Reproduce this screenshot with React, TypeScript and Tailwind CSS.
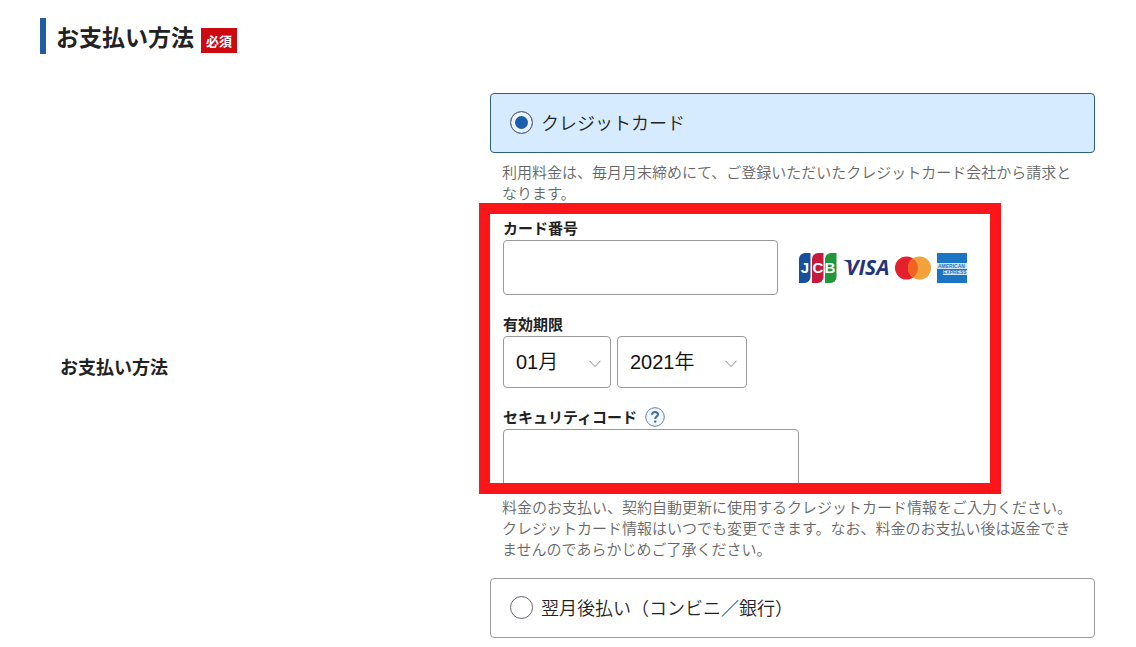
import { useState } from "react";
import type { ReactNode } from "react";
import { clsx } from "clsx";

type PaymentMethod = "card" | "deferred";

const MONTHS = ["01", "02", "03", "04", "05", "06", "07", "08", "09", "10", "11", "12"];
const YEARS = [2021, 2022, 2023, 2024, 2025, 2026, 2027, 2028, 2029, 2030];

function MethodOption({
  value,
  selected,
  onSelect,
  children,
}: {
  value: PaymentMethod;
  selected: PaymentMethod;
  onSelect: (value: PaymentMethod) => void;
  children: ReactNode;
}) {
  const checked = value === selected;

  return (
    <label
      className={clsx(
        "flex items-center gap-2 px-[19px] pt-3.5 pb-4 border rounded-sm text-lg leading-7 font-[350] cursor-pointer",
        checked ? "bg-[#d7ebff] border-[#2f5f80]" : "bg-white border-[#999]"
      )}
    >
      <input
        type="radio"
        name="payment"
        value={value}
        checked={checked}
        onChange={() => onSelect(value)}
        className="appearance-none w-[23px] h-[23px] shrink-0 rounded-full border border-[#667] bg-white checked:bg-[#1a5fab] checked:shadow-[inset_0_0_0_4px_#edf3fa]"
      />
      <span>{children}</span>
    </label>
  );
}

function SelectBox({
  label,
  className,
  children,
}: {
  label: string;
  className: string;
  children: ReactNode;
}) {
  return (
    <div className={clsx("relative", className)}>
      <select
        aria-label={label}
        className="appearance-none w-full h-[52px] pl-3 pr-8 border border-[#999] rounded-sm bg-white text-xl text-[#111] font-[350] font-['Liberation_Sans','Noto_Sans_CJK_JP',sans-serif]"
      >
        {children}
      </select>
      <svg
        className="absolute right-2.5 top-6 w-3 h-2 pointer-events-none"
        viewBox="0 0 12 8"
        fill="none"
        stroke="#8a8a8a"
      >
        <path d="M0.5 0.8 6 6.5 11.5 0.8" />
      </svg>
    </div>
  );
}

function CardBrands() {
  return (
    <div className="flex items-center gap-1 shrink-0">
      {/* JCB */}
      <svg className="w-[39px] h-[30px]" viewBox="0 0 39 30" role="img" aria-label="JCB">
        <path d="M7 0H12.5V24a6 6 0 0 1-6 6H1V6a6 6 0 0 1 6-6Z" fill="#164f9e" />
        <path d="M20 0H25.5V24a6 6 0 0 1-6 6H14V6a6 6 0 0 1 6-6Z" fill="#c5193d" />
        <path d="M33 0H38.5V24a6 6 0 0 1-6 6H27V6a6 6 0 0 1 6-6Z" fill="#22963b" />
        <text
          y="20"
          textAnchor="middle"
          fontSize="15"
          fontWeight="700"
          fill="#fff"
          className="font-['Liberation_Sans',sans-serif]"
        >
          <tspan x="7">J</tspan>
          <tspan x="20">C</tspan>
          <tspan x="32">B</tspan>
        </text>
      </svg>

      {/* VISA */}
      <svg className="w-[50px] h-[30px]" viewBox="0 0 50 30" role="img" aria-label="VISA">
        <path d="M2 7H9L11 13C8 10 5 8 2 7Z" fill="#26337a" />
        <text
          x="5"
          y="22"
          fontSize="21"
          fontWeight="700"
          fontStyle="italic"
          fill="#26337a"
          className="font-['Open_Sans',sans-serif]"
        >
          VISA
        </text>
      </svg>

      {/* Mastercard */}
      <svg className="w-9 h-6" viewBox="0 0 36 24" role="img" aria-label="Mastercard">
        <circle cx="11.5" cy="12" r="11.5" fill="#e3202b" />
        <circle cx="24.5" cy="12" r="11.5" fill="#f3a13a" />
        <path d="M18 2.5a11.5 11.5 0 0 1 0 19a11.5 11.5 0 0 1 0-19Z" fill="#f26322" />
      </svg>

      {/* American Express */}
      <svg className="w-[30px] h-[30px] ml-0.5" viewBox="0 0 30 30" role="img" aria-label="American Express">
        <rect width="30" height="30" fill="#1c74c4" />
        <path d="M0 10H30V16H0ZM6 17H30V22H6Z" fill="#d3e5f5" />
        <g fontSize="5" fontWeight="700" fill="#1c74c4" className="font-['Liberation_Sans',sans-serif]">
          <text x="1" y="15">AMERICAN</text>
          <text x="6" y="21">EXPRESS</text>
        </g>
      </svg>
    </div>
  );
}

export default function App() {
  const [method, setMethod] = useState<PaymentMethod>("card");

  return (
    <main className="bg-white pl-10 pr-[41px] pt-[18px] pb-2 text-[#222] font-['Noto_Sans_CJK_JP',sans-serif]">
      {/* Section heading */}
      <header className="flex items-center h-9 border-l-6 border-[#1f5ea3] pl-2.5">
        <h1 className="text-[23px] leading-8 font-bold">お支払い方法</h1>
        <span className="ml-[7px] mt-2 px-[5px] bg-[#cc0a0f] text-white text-[13px] leading-[25px] font-bold">
          必須
        </span>
      </header>

      <div className="flex items-center mt-[39px]">
        <h2 className="w-[450px] shrink-0 pl-5 text-lg font-bold">お支払い方法</h2>

        <div className="flex-1 min-w-0">
          <MethodOption value="card" selected={method} onSelect={setMethod}>
            クレジットカード
          </MethodOption>

          <p className="mt-2 mb-0.5 px-3 text-[15px] leading-[21px] font-[350] text-[#666]">
            利用料金は、毎月月末締めにて、ご登録いただいたクレジットカード会社から請求となります。
          </p>

          {/* Card details */}
          <div className="relative max-w-[511px] pt-[11px] pl-[13px] pr-[34px]">
            <div className="absolute -top-0.5 -bottom-[5px] -left-[11px] right-0 border-[11px] border-[#fc1619] pointer-events-none z-10" />

            <label htmlFor="card-number" className="block text-[15px] leading-6 font-bold">
              カード番号
            </label>
            <div className="flex items-center gap-5">
              <input
                id="card-number"
                type="text"
                inputMode="numeric"
                className="w-[275px] h-[55px] px-3 border border-[#999] rounded-sm text-xl"
              />
              <CardBrands />
            </div>

            <fieldset className="mt-[17px]">
              <legend className="text-[15px] leading-6 font-bold">有効期限</legend>
              <div className="flex gap-1.5">
                <SelectBox label="月" className="w-[108px]">
                  {MONTHS.map((month) => (
                    <option key={month}>{month}月</option>
                  ))}
                </SelectBox>
                <SelectBox label="年" className="w-[130px]">
                  {YEARS.map((year) => (
                    <option key={year}>{year}年</option>
                  ))}
                </SelectBox>
              </div>
            </fieldset>

            <div className="flex items-center gap-2 h-6 mt-[17px]">
              <label htmlFor="security-code" className="text-[15px] leading-6 font-bold">
                セキュリティコード
              </label>
              <button type="button" aria-label="セキュリティコードとは" className="cursor-pointer">
                <svg className="w-5 h-5" viewBox="0 0 20 20" fill="none">
                  <circle cx="10" cy="10" r="9.3" fill="#f1f7fd" stroke="#5d83ad" />
                  <path
                    d="M7 7.8C7.1 5.9 8.3 5 10 5C11.8 5 13 6 13 7.5C13 9.6 10.2 9.5 10.2 12"
                    stroke="#3f6da5"
                    strokeWidth="2"
                  />
                  <circle cx="10.2" cy="14.6" r="1.2" fill="#3f6da5" />
                </svg>
              </button>
            </div>
            <input
              id="security-code"
              type="text"
              inputMode="numeric"
              className="block w-[296px] h-[60px] px-3 border border-[#999] rounded-sm text-xl"
            />
          </div>

          <p className="mt-[7px] mb-[19px] px-3 text-[15px] leading-[21px] font-[350] text-[#666]">
            料金のお支払い、契約自動更新に使用するクレジットカード情報をご入力ください。クレジットカード情報はいつでも変更できます。なお、料金のお支払い後は返金できませんのであらかじめご了承ください。
          </p>

          <MethodOption value="deferred" selected={method} onSelect={setMethod}>
            翌月後払い（コンビニ／銀行）
          </MethodOption>
        </div>
      </div>
    </main>
  );
}
